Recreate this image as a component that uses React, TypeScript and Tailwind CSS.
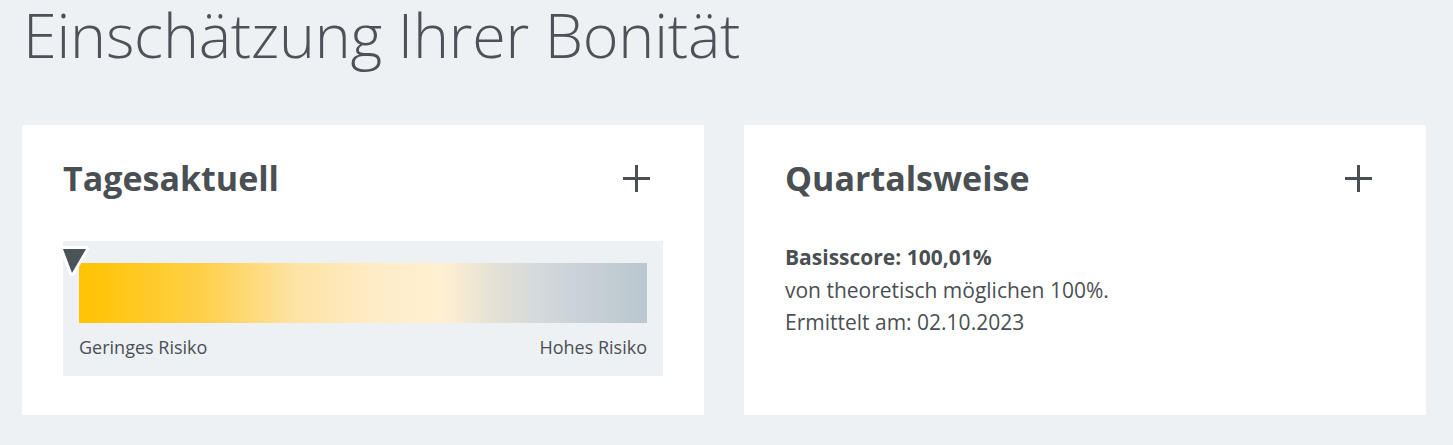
const font = { fontFamily: '"Open Sans", "Noto Sans", sans-serif' };

const PlusIcon = () => (
  <svg width="27" height="27" viewBox="0 0 27 27" className="mr-[13px] shrink-0">
    <rect x="12" y="0" width="3" height="27" fill="#4a4f54" />
    <rect x="0" y="12" width="27" height="3" fill="#4a4f54" />
  </svg>
);

const Marker = () => (
  <svg width="32" height="40" viewBox="0 0 32 40" className="absolute -left-[4px] top-[2px]">
    <polygon
      points="4,6 27,6 13,30"
      fill="#4a5358"
      stroke="#ffffff"
      strokeWidth="6"
      strokeLinejoin="round"
      paintOrder="stroke"
    />
  </svg>
);

const Card = ({ title, children }: { title: string; children: React.ReactNode }) => (
  <div className="w-[682px] h-[290px] bg-white px-[41px] pt-[33px]">
    <div className="flex h-[40px] items-center justify-between">
      <h2 className="text-[34px] leading-[40px] font-bold text-[#4a4f54]">{title}</h2>
      <PlusIcon />
    </div>
    <div className="mt-[43px]">{children}</div>
  </div>
);

export default function App() {
  return (
    <div className="min-h-screen bg-[#edf1f4] pl-[22px] pt-px text-[#4a4f54]" style={font}>
      <h1 className="-mt-[8px] pl-[1px] text-[61px] leading-[84px] font-light text-[#4c5257] tracking-[-0.2px]">
        Einschätzung Ihrer Bonität
      </h1>
      <div className="mt-[48px] flex gap-[40px]">
        <Card title="Tagesaktuell">
          <div className="relative w-[600px] bg-[#edf1f4] px-[16px] pt-[22px] pb-[17px]">
            <div className="h-[60px] bg-[linear-gradient(to_right,#ffc300_0%,#fed04a_22%,#fee3a4_38%,#feecc6_52%,#fff0d2_64%,#e4e1d5_73%,#d2d8dc_82%,#bac7cf_100%)]" />
            <div className="mt-[12px] flex justify-between text-[18px] leading-[24px]">
              <span>Geringes Risiko</span>
              <span>Hohes Risiko</span>
            </div>
            <Marker />
          </div>
        </Card>
        <Card title="Quartalsweise">
          <div className="text-[21px] leading-[32.5px]">
            <p className="font-bold">Basisscore: 100,01%</p>
            <p>von theoretisch möglichen 100%.</p>
            <p>Ermittelt am: 02.10.2023</p>
          </div>
        </Card>
      </div>
    </div>
  );
}
